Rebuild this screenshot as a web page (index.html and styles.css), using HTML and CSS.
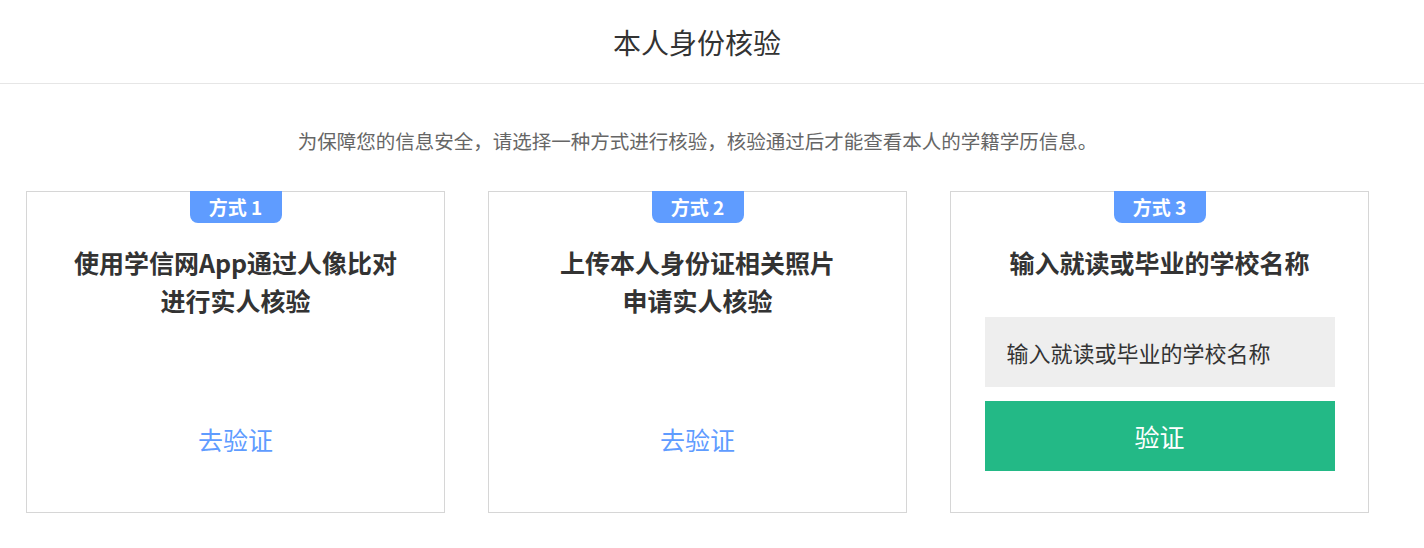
FILE: index.html
```html
<!DOCTYPE html>
<html lang="zh-CN">
<head>
<meta charset="UTF-8" />
<meta name="viewport" content="width=device-width, initial-scale=1" />
<title>本人身份核验</title>
<link rel="stylesheet" href="styles.css">
</head>
<body>
<div class="header">
  <h1>本人身份核验</h1>
</div>
<div class="main">
  <p class="tip">为保障您的信息安全，请选择一种方式进行核验，核验通过后才能查看本人的学籍学历信息。</p>
  <div class="cards">
    <div class="card">
      <span class="badge">方式 1</span>
      <h3>使用学信网App通过人像比对<br>进行实人核验</h3>
      <a href="#" class="go">去验证</a>
    </div>
    <div class="card">
      <span class="badge">方式 2</span>
      <h3>上传本人身份证相关照片<br>申请实人核验</h3>
      <a href="#" class="go">去验证</a>
    </div>
    <div class="card">
      <span class="badge">方式 3</span>
      <h3>输入就读或毕业的学校名称</h3>
      <form class="school-form">
        <input type="text" placeholder="输入就读或毕业的学校名称" />
        <button type="button">验证</button>
      </form>
    </div>
  </div>
</div>
</body>
</html>
```

FILE: styles.css
```css
body {
  margin: 0;
  font-family: "Noto Sans CJK SC", "Noto Sans", sans-serif;
  background: #fff;
  color: #333;
}
.header {
  height: 83px;
  border-bottom: 1px solid #e6e6e6;
  display: flex;
  align-items: center;
  justify-content: center;
  padding-right: 30px;
}
.header h1 {
  margin: 0;
  font-size: 28px;
  font-weight: normal;
  color: #333;
  line-height: 40px;
}
.main {
  width: 1343px;
  margin-left: 26px;
}
.tip {
  margin: 42px 0 35px 0;
  text-align: center;
  font-size: 19.5px;
  line-height: 30px;
  color: #666;
}
.cards {
  display: flex;
  gap: 43px;
}
.card {
  width: 420px;
  height: 322px;
  box-sizing: border-box;
  border: 1px solid #d6d6d6;
  display: flex;
  flex-direction: column;
  align-items: center;
}
.badge {
  margin-top: -1px;
  width: 92px;
  height: 32px;
  line-height: 32px;
  text-align: center;
  background: #5f9cff;
  color: #fff;
  font-size: 19px;
  font-weight: bold;
  border-radius: 0 0 8px 8px;
}
.card h3 {
  margin: 20px 0 0 0;
  font-size: 25px;
  line-height: 38px;
  text-align: center;
  color: #333;
}
.go {
  margin-top: 100px;
  font-size: 25px;
  line-height: 40px;
  color: #5f9cff;
  text-decoration: none;
}
.school-form {
  margin-top: 36px;
  width: 350px;
}
.school-form input {
  display: block;
  width: 100%;
  height: 70px;
  box-sizing: border-box;
  padding: 0 22px;
  border: none;
  background: #eee;
  font-family: inherit;
  font-size: 22px;
  color: #333;
  outline: none;
}
.school-form input::placeholder {
  color: #333;
}
.school-form button {
  display: block;
  width: 100%;
  height: 70px;
  margin-top: 14px;
  border: none;
  background: #23b986;
  color: #fff;
  font-family: inherit;
  font-size: 25px;
  cursor: pointer;
}
```
